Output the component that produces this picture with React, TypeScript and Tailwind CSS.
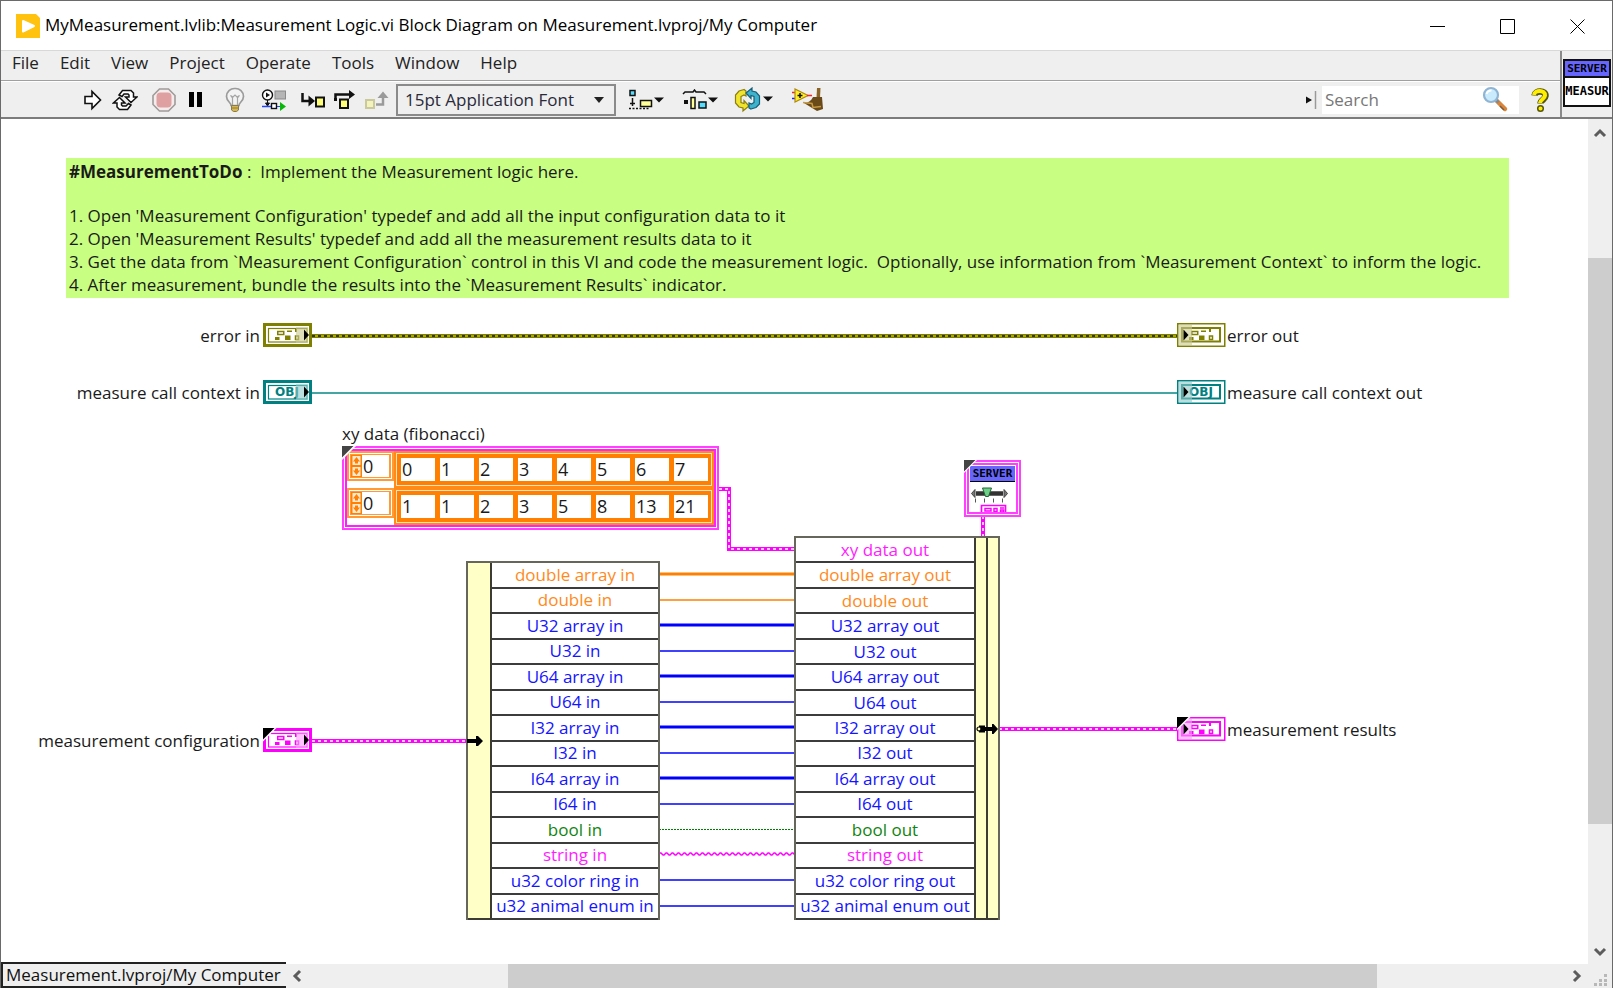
import type { ReactNode } from "react";

const OLIVE = "#808000";
const TEAL = "#008080";
const PINK = "#ff00ff";
const ORANGE = "#ff8000";
const BLUE = "#0000ff";
const GREEN = "#008000";

const ROW_PITCH = 25.5;

type Signal = { name: string; text: string; color: string; wire: "array" | "scalar" | "bool" | "string" };

const signals: Signal[] = [
  { name: "double array", text: "text-[#ff8a1c]", color: ORANGE, wire: "array" },
  { name: "double", text: "text-[#ff8a1c]", color: ORANGE, wire: "scalar" },
  { name: "U32 array", text: "text-[#1414ff]", color: BLUE, wire: "array" },
  { name: "U32", text: "text-[#1414ff]", color: BLUE, wire: "scalar" },
  { name: "U64 array", text: "text-[#1414ff]", color: BLUE, wire: "array" },
  { name: "U64", text: "text-[#1414ff]", color: BLUE, wire: "scalar" },
  { name: "I32 array", text: "text-[#1414ff]", color: BLUE, wire: "array" },
  { name: "I32", text: "text-[#1414ff]", color: BLUE, wire: "scalar" },
  { name: "I64 array", text: "text-[#1414ff]", color: BLUE, wire: "array" },
  { name: "I64", text: "text-[#1414ff]", color: BLUE, wire: "scalar" },
  { name: "bool", text: "text-[#108410]", color: GREEN, wire: "bool" },
  { name: "string", text: "text-[#ff1cff]", color: PINK, wire: "string" },
  { name: "u32 color ring", text: "text-[#1414ff]", color: BLUE, wire: "scalar" },
  { name: "u32 animal enum", text: "text-[#1414ff]", color: BLUE, wire: "scalar" },
];

const fibonacci = [
  { label: "x", values: [0, 1, 2, 3, 4, 5, 6, 7] },
  { label: "y", values: [1, 1, 2, 3, 5, 8, 13, 21] },
];

const menus = ["File", "Edit", "View", "Project", "Operate", "Tools", "Window", "Help"];

function ToolButton({ label, wide, children }: { label: string; wide?: boolean; children: ReactNode }) {
  return (
    <button
      type="button"
      aria-label={label}
      className={wide ? "flex h-8 w-[54px] items-center justify-center" : "flex h-8 w-8 items-center justify-center"}
    >
      {children}
    </button>
  );
}

function RunIcon() {
  return (
    <svg width="20" height="22" viewBox="0 0 20 22" fill="#fff" stroke="#111" strokeWidth="1.6">
      <path d="M2 7.500h7V2.500l8.500 8.500L9 19.500v-5H2z" />
    </svg>
  );
}

function RunContinuousIcon() {
  return (
    <svg width="26" height="22" viewBox="0 0 26 22" fill="#fff" stroke="#111" strokeWidth="1.500">
      <path d="M7 6l3.500-4.500H19l2.500 2.500v4H25l-6 5.500-5.500-5.500H17V6l-1-1h-4L10 7.500z" />
      <path d="M19 16l-3.500 4.500H7.500L5 18v-4H1.500l6-5.500 5.500 5.500H9.500v2l1 1h3.500l2.500-2.500z" />
    </svg>
  );
}

function AbortIcon() {
  return (
    <svg width="26" height="26" viewBox="0 0 26 26">
      <path d="M8.500 2h9L24 8.500v9L17.500 24h-9L2 17.500v-9z" fill="#f4ecec" stroke="#a09a9a" strokeWidth="1.600" />
      <rect x="5.500" y="5.500" width="15" height="15" rx="4" fill="#dfa0a2" />
    </svg>
  );
}

function PauseIcon() {
  return (
    <svg width="16" height="18" viewBox="0 0 16 18" fill="#000">
      <rect x="1" y="1" width="5" height="15" />
      <rect x="9" y="1" width="5" height="15" />
    </svg>
  );
}

function BulbIcon() {
  return (
    <svg width="22" height="26" viewBox="0 0 22 26">
      <path
        d="M11 1.500a8 8 0 0 0-8.500 8c0 3 1.500 4.500 3 6 1 1 1.500 1.800 1.500 3h8c0-1.200.5-2 1.500-3 1.500-1.500 3-3 3-6a8 8 0 0 0-8.500-8z"
        fill="#f3f3f3"
        stroke="#9b9b9b"
        strokeWidth="1.700"
      />
      <path d="M8.500 18V11l-2-2.500L9 10l2-2 2 2 2.500-1.500-2 2.500v7" fill="none" stroke="#a5a5a5" strokeWidth="1.200" />
      <path d="M7.500 18.500h7v4.500l-2 1.500h-3l-2-1.500z" fill="#d9b64a" stroke="#8a7b4a" />
      <path d="M7.500 21h7" stroke="#8a7b4a" />
    </svg>
  );
}

function RetainIcon() {
  return (
    <svg width="26" height="22" viewBox="0 0 26 22">
      <circle cx="6.500" cy="6" r="5" fill="#fff" stroke="#111" strokeWidth="1.400" />
      <path d="M5 3.500v5l4-2.500z" fill="#111" />
      <rect x="14" y="2" width="10.500" height="8" fill="#b5b5b5" stroke="#8a8a8a" />
      <path d="M6.500 11v4M4.500 14h4l-2 3z" fill="#111" stroke="#111" />
      <path d="M1 17.500h10" stroke="#2244ff" strokeWidth="1.500" />
      <rect x="10.500" y="14.500" width="5" height="5" fill="#fff" stroke="#111" strokeWidth="1.400" />
      <path d="M16 17.500h3" stroke="#2244ff" />
      <path d="M19 13l6 4.500-6 4.500z" fill="#08b808" />
    </svg>
  );
}

function StepIntoIcon() {
  return (
    <svg width="26" height="20" viewBox="0 0 26 20">
      <path d="M2.500 3v8H11" fill="none" stroke="#111" strokeWidth="2.500" />
      <path d="M8.500 5.500L15 11l-6.500 5.500z" fill="#111" />
      <rect x="16" y="7.500" width="8" height="9" fill="#ffff77" stroke="#111" strokeWidth="2" />
    </svg>
  );
}

function StepOverIcon() {
  return (
    <svg width="24" height="22" viewBox="0 0 24 22">
      <path d="M2.500 10V5.500H18" fill="none" stroke="#111" strokeWidth="2.500" />
      <path d="M1 9h3v3H1zM16 1l6 4.500L16 10z" fill="#111" />
      <rect x="7" y="10.500" width="8" height="8.500" fill="#ffff77" stroke="#111" strokeWidth="2" />
    </svg>
  );
}

function StepOutIcon() {
  return (
    <svg width="26" height="22" viewBox="0 0 26 22">
      <rect x="2" y="11" width="8" height="8" fill="#f3f3bb" stroke="#c9c99c" strokeWidth="2" />
      <path d="M12 15.500h7V7" fill="none" stroke="#9a9a9a" strokeWidth="2.500" />
      <path d="M13.500 9L19 2.500 24.500 9z" fill="#9a9a9a" />
    </svg>
  );
}

function AlignIcon() {
  return (
    <svg width="36" height="22" viewBox="0 0 36 22">
      <rect x="2" y="1.500" width="5" height="5" fill="#55ddff" stroke="#111" strokeWidth="1.500" />
      <path d="M4.500 9v8M2 14.500h5" stroke="#111" strokeWidth="1.500" />
      <rect x="12.500" y="11.500" width="11" height="6" fill="#ffff99" stroke="#111" strokeWidth="1.500" />
      <path d="M1 19.500h20" stroke="#111" strokeWidth="1.500" strokeDasharray="2 1.500" />
      <path d="M26 8.500h10l-5 5z" fill="#111" />
    </svg>
  );
}

function DistributeIcon() {
  return (
    <svg width="36" height="22" viewBox="0 0 36 22">
      <path d="M1 5l2-2h8l1.500-2L14 3h8l2 2" fill="none" stroke="#111" strokeWidth="1.500" />
      <rect x="2" y="11" width="4" height="4" fill="#111" />
      <rect x="9" y="8.500" width="4" height="11" fill="#ffff99" stroke="#111" strokeWidth="1.500" />
      <rect x="17" y="13" width="7" height="6" fill="#55ddff" stroke="#111" strokeWidth="1.500" />
      <path d="M26 8.500h10l-5 5z" fill="#111" />
    </svg>
  );
}

function ReorderIcon() {
  return (
    <svg width="40" height="26" viewBox="0 0 40 26">
      <path
        d="M10 2.500L5 4 1.500 8v8l3.500 4 4 1v3l6-5-5-5.500v3L7 15.500v-6L10 8l2 1V4z"
        fill="#f0e42c"
        stroke="#8c7d10"
        strokeWidth="1.200"
      />
      <path
        d="M17 22l5-1.500L25.500 17V9L22 5l-4-1V1l-6 5 5 5.500v-3L20 9.500v6L17.500 17 15 16v5z"
        fill="#3fb2cc"
        stroke="#155f78"
        strokeWidth="1.200"
      />
      <path d="M29 9.500h10l-5 5z" fill="#111" />
    </svg>
  );
}

function CleanupIcon() {
  return (
    <svg width="34" height="26" viewBox="0 0 34 26">
      <path d="M1 5.500h4" stroke="#ff2020" strokeWidth="1.500" />
      <path d="M1 11.500h4" stroke="#2020ff" strokeWidth="1.500" />
      <path d="M4 2v13l13-6.500z" fill="#ffee22" stroke="#b08a10" strokeWidth="1.200" />
      <path d="M9 6v5M6.500 8.500h5" stroke="#111" strokeWidth="1.500" />
      <path d="M16 8.500h5" stroke="#ff2020" strokeWidth="1.500" />
      <path d="M26 1h3.500l-.5 10h-3.500z" fill="#8a6426" />
      <path d="M22 10h9l1 12-6 2-13-8c4 0 7-2 9-6z" fill="#6a4a18" />
      <path d="M12 15.500l9 1 1 4 8-1" fill="none" stroke="#c69a45" strokeWidth="1.500" />
    </svg>
  );
}

function MagnifierIcon() {
  return (
    <svg width="28" height="28" viewBox="0 0 28 28">
      <path d="M15.500 14.500L24 23" stroke="#d8863c" strokeWidth="4.500" strokeLinecap="round" />
      <path d="M19 20l4 4" stroke="#7d5a3a" strokeWidth="1.500" />
      <path d="M14.500 13.500l3 3" stroke="#7d8a96" strokeWidth="3" />
      <circle cx="10" cy="9" r="7" fill="#c9ebfb" stroke="#8fb4d4" strokeWidth="2.200" />
      <path d="M5.500 8a5 5 0 0 1 5-3.500" fill="none" stroke="#fff" strokeWidth="2" />
    </svg>
  );
}

function HelpIcon() {
  return (
    <svg width="20" height="26" viewBox="0 0 20 26">
      <path d="M4.500 8.500C5 3 16 3 15.500 9c-.3 3.500-5 4-5 7.500" fill="none" stroke="#55550a" strokeWidth="6.500" />
      <circle cx="10.500" cy="21.500" r="2.800" fill="#ffee00" stroke="#55550a" strokeWidth="1.500" />
      <path d="M4 8C4.500 2.500 15.500 2.500 15 8.500c-.3 3.500-5 4-5 7.500" fill="none" stroke="#ffee00" strokeWidth="4" />
    </svg>
  );
}

function Chevron({ d }: { d: string }) {
  return (
    <svg width="14" height="14" viewBox="0 0 14 14" fill="none" stroke="#5c5c5c" strokeWidth="3">
      <path d={d} />
    </svg>
  );
}

function Terminal({
  color,
  tint,
  output,
  glyph,
  typedef,
}: {
  color: string;
  tint: string;
  output?: boolean;
  glyph: "cluster" | "object";
  typedef?: boolean;
}) {
  return (
    <svg width="49" height="24" viewBox="0 0 49 24" className="block shrink-0">
      {output ? (
        <>
          <rect x="0.750" y="0.750" width="47" height="22.500" fill="#fff" stroke={color} strokeWidth="1.500" />
          <rect x="5" y="5" width="38" height="13.500" fill="#fff" stroke={color} strokeWidth="2" />
        </>
      ) : (
        <>
          <rect x="1.500" y="1.500" width="46" height="21" fill="#fff" stroke={color} strokeWidth="3" />
          <rect x="5.500" y="5.500" width="38.500" height="13.500" fill="#fff" stroke={color} strokeWidth="1.200" />
        </>
      )}
      {glyph === "cluster" ? (
        <g fill={color}>
          <rect x="14.750" y="8.500" width="6" height="3" fill="none" stroke={color} strokeWidth="1.500" />
          <rect x="12" y="14" width="4.500" height="3" />
          <rect x="24" y="7.500" width="5" height="1.500" />
          <rect x="22" y="12.500" width="5.500" height="4.500" />
          <rect x="32" y="5.500" width="2" height="3.500" />
          <rect x="32.500" y="13" width="3" height="3.500" fill="none" stroke={color} strokeWidth="1.500" />
        </g>
      ) : (
        <text x="24" y="16" textAnchor="middle" fill={color} className="font-['DejaVu_Sans'] text-[12px] font-bold">
          OBJ
        </text>
      )}
      {output ? (
        <rect x="2" y="2" width="13" height="20" fill={tint} fillOpacity="0.600" />
      ) : (
        <rect x="33" y="4" width="12" height="16" fill={tint} fillOpacity="0.600" />
      )}
      <path d={output ? "M6.500 6.500l5 5.500-5 5.500z" : "M41 6.500l5 5.500-5 5.500z"} fill="#000" />
      {typedef && (
        <>
          <path d="M0 0h13.500L0 13.500z" fill="#fff" />
          <path d="M0 0h11.500L0 11.500z" fill="#000" />
        </>
      )}
    </svg>
  );
}

function ClusterWire({ d, color, dots }: { d: string; color: string; dots: string }) {
  return (
    <>
      <path d={d} fill="none" stroke={color} strokeWidth="4" />
      <path d={d} fill="none" stroke={dots} strokeWidth="1.500" strokeDasharray="3 3" />
    </>
  );
}

function Wires() {
  const zigzag = "M658 855" + " l2 -2 h1 l2 2 h1".repeat(23);
  return (
    <svg className="absolute top-0 left-0 h-[843px] w-[1587px]" viewBox="1 119 1587 843">
      <ClusterWire d="M312 336H1177" color="#a8a800" dots="#111" />
      <path d="M312 334.500H1177M312 337.500H1177" stroke={OLIVE} strokeWidth="1" />
      <path d="M312 393H1177" stroke="#45a5a5" strokeWidth="2" />
      <ClusterWire d="M312 741H467" color={PINK} dots="#fff" />
      <ClusterWire d="M999 729H1177" color={PINK} dots="#fff" />
      <ClusterWire d="M719 489H729V549H795" color={PINK} dots="#fff" />
      <ClusterWire d="M983 516V538" color={PINK} dots="#fff" />
      {signals.map((s, i) => {
        const y = Math.round(574 + i * ROW_PITCH);
        if (s.wire === "string") return <path key={s.name} d={zigzag} fill="none" stroke={PINK} strokeWidth="1.500" />;
        if (s.wire === "bool")
          return <path key={s.name} d={`M659 ${y + 0.5}H795`} stroke={GREEN} strokeWidth="1" strokeDasharray="2 1" />;
        if (s.wire === "array") return <path key={s.name} d={`M659 ${y}H795`} stroke={s.color} strokeWidth="3" />;
        return <path key={s.name} d={`M659 ${y}H795`} stroke={s.color} strokeOpacity="0.750" strokeWidth="2" />;
      })}
    </svg>
  );
}

function SignalRow({ label, tone }: { label: string; tone: string }) {
  return (
    <li className="flex flex-1 items-center justify-center border-b-2 border-[#3c3c3c]">
      <span className={`leading-5 whitespace-nowrap ${tone}`}>{label}</span>
    </li>
  );
}

function Spinner() {
  return (
    <svg width="11" height="22" viewBox="0 0 11 22" className="shrink-0">
      <rect width="11" height="22" fill={ORANGE} />
      <path d="M1.500 1h8v9h-8zM1.500 12h8v9h-8z" fill="#ffe9d3" />
      <path d="M5.500 2L9 6.500H2zM5.500 20L9 15.500H2zM4 6.500h3v2H4zM4 13.500h3v2H4z" fill={ORANGE} />
    </svg>
  );
}

function ArrayConstant() {
  return (
    <div className="absolute top-[327px] left-[341px] border-2 border-[#ff40ff] bg-white p-px text-[18px]">
      <div className="flex flex-col border-2 border-[#ff20ff] bg-white">
        {fibonacci.map((row) => (
          <div key={row.label} className="flex items-start">
            <div className="border-2 border-[#ff9a35] bg-white p-px">
              <div className="flex border border-[#ff9a35]">
                <Spinner />
                <input
                  aria-label={`${row.label} index`}
                  defaultValue={0}
                  className="h-[22px] w-7 border-r border-[#ff9a35] bg-white pl-px outline-none"
                />
              </div>
            </div>
            <div className="border-2 border-[#ff8a15] bg-[#ffe0c0] p-px">
              <div className="flex gap-[5px] bg-[#ff8000] py-1 pr-[3px] pl-1">
                {row.values.map((v, i) => (
                  <input
                    key={i}
                    aria-label={`${row.label} ${i}`}
                    defaultValue={v}
                    className="h-[23px] w-[34px] bg-white pl-px outline-none"
                  />
                ))}
              </div>
            </div>
          </div>
        ))}
      </div>
      <svg width="14" height="14" viewBox="0 0 14 14" className="absolute -top-[2px] -left-[2px]">
        <path d="M0 0h14L0 14z" fill="#fff" />
        <path d="M0 0h11.500L0 11.500z" fill="#444" />
      </svg>
    </div>
  );
}

function ServerConstant() {
  return (
    <div className="absolute top-[341px] left-[963px] h-[57px] w-[57px] border-2 border-[#ff40ff] bg-white p-px">
      <div className="flex h-full flex-col items-center border-2 border-[#ff40ff] p-px">
        <div className="w-full border-b border-black bg-[#6666ff] text-center font-['DejaVu_Sans_Mono'] text-[11px] leading-[15px] font-bold text-black">
          SERVER
        </div>
        <svg width="45" height="30" viewBox="0 0 45 30" className="shrink-0">
          <path d="M5 7.500L1.500 11.500 5 15.500z" fill="#777" stroke="#444" />
          <path d="M34 7.500l3.500 4L34 15.500z" fill="#777" stroke="#444" />
          <path d="M6 11.500h27" stroke="#333" strokeWidth="4.500" />
          <path d="M5.500 16.500v4M14.500 16.500v4M23.500 16.500v4M32.500 16.500v4" stroke="#555" />
          <path d="M12.500 6h9l-3 8.500h-3z" fill="#6fd08a" stroke="#226633" />
          <path d="M11.500 30v-6.500h24V30" fill="#fff" stroke={PINK} strokeWidth="1.700" />
          <path d="M15 26.500h6v2.500h-6zM24 26.500h3v3h-3zM30 26h4M30.500 28h3v2h-3z" fill="none" stroke={PINK} strokeWidth="1.500" />
        </svg>
      </div>
      <svg width="13" height="13" viewBox="0 0 13 13" className="absolute -top-[2px] -left-[2px]">
        <path d="M0 0h13L0 13z" fill="#fff" />
        <path d="M0 0h11.500L0 11.500z" fill="#444" />
      </svg>
    </div>
  );
}

function Diagram() {
  return (
    <main className="relative min-w-0 flex-1 overflow-hidden bg-white text-[17px] text-[#1a1a1a]">
      <Wires />

      <section className="absolute top-[39px] left-[65px] w-[1443px] bg-[#c8ff82] px-[3px] py-[2px] leading-[23px] whitespace-pre">
        <p className="mb-[21px]">
          <strong className="font-bold">#MeasurementToDo</strong> :&nbsp; Implement the Measurement logic here.
        </p>
        <p>1. Open 'Measurement Configuration' typedef and add all the input configuration data to it</p>
        <p>2. Open 'Measurement Results' typedef and add all the measurement results data to it</p>
        <p>
          3. Get the data from `Measurement Configuration` control in this VI and code the measurement logic.&nbsp; Optionally, use
          information from `Measurement Context` to inform the logic.
        </p>
        <p>4. After measurement, bundle the results into the `Measurement Results` indicator.</p>
      </section>

      <div className="absolute top-[204px] right-[calc(100%-311px)] flex items-start gap-[3px] whitespace-nowrap">
        <span className="leading-[26px]">error in</span>
        <Terminal color={OLIVE} tint="#c8c890" glyph="cluster" />
      </div>
      <div className="absolute top-[261px] right-[calc(100%-311px)] flex items-start gap-[3px] whitespace-nowrap">
        <span className="leading-[26px]">measure call context in</span>
        <Terminal color={TEAL} tint="#90c8c8" glyph="object" />
      </div>
      <div className="absolute top-[609px] right-[calc(100%-311px)] flex items-start gap-[3px] whitespace-nowrap">
        <span className="leading-[26px]">measurement configuration</span>
        <Terminal color={PINK} tint="#ff9cff" glyph="cluster" typedef />
      </div>

      <div className="absolute top-[204px] left-[1176px] flex items-start gap-px whitespace-nowrap">
        <Terminal color={OLIVE} tint="#c8c890" glyph="cluster" output />
        <span className="leading-[26px]">error out</span>
      </div>
      <div className="absolute top-[261px] left-[1176px] flex items-start gap-px whitespace-nowrap">
        <Terminal color={TEAL} tint="#90c8c8" glyph="object" output />
        <span className="leading-[26px]">measure call context out</span>
      </div>
      <div className="absolute top-[598px] left-[1176px] flex items-start gap-px whitespace-nowrap">
        <Terminal color={PINK} tint="#ff9cff" glyph="cluster" output typedef />
        <span className="leading-[26px]">measurement results</span>
      </div>

      <h2 className="absolute top-[303px] left-[341px] leading-6">xy data (fibonacci)</h2>
      <ArrayConstant />
      <ServerConstant />

      <div className="absolute top-[442px] left-[465px] flex h-[359px] w-[194px] border-2 border-b-0 border-[#66665a] bg-white">
        <div className="w-6 shrink-0 border-r-2 border-b-2 border-[#3c3c34] bg-[#ffffc8]" />
        <ul className="flex flex-1 flex-col">
          {signals.map((s) => (
            <SignalRow key={s.name} label={`${s.name} in`} tone={s.text} />
          ))}
        </ul>
      </div>

      <div className="absolute top-[417px] left-[793px] flex h-[384px] w-[206px] border-2 border-b-0 border-[#66665a] bg-white">
        <ul className="flex flex-1 flex-col">
          <SignalRow label="xy data out" tone="text-[#ff1cff]" />
          {signals.map((s) => (
            <SignalRow key={s.name} label={`${s.name} out`} tone={s.text} />
          ))}
        </ul>
        <div className="w-[12px] shrink-0 border-b-2 border-l-2 border-[#3c3c34] bg-[#ffffc8]" />
        <div className="w-[12px] shrink-0 border-b-2 border-l-2 border-[#3c3c34] bg-[#ffffc8]" />
      </div>

      <svg width="16" height="12" viewBox="0 0 16 12" className="absolute top-[616px] left-[466px]">
        <path d="M0 4h9V1h2l5 5-5 5H9V8H0z" fill="#000" />
      </svg>
      <svg width="24" height="12" viewBox="0 0 24 12" className="absolute top-[604px] left-[975px]">
        <path d="M3 2.500h6V4h7V1h1.500L22 6l-4.500 5H16V8H9v1.500H3z" fill="#000" />
        <circle cx="3" cy="6" r="2" fill="#ffffc8" stroke="#000" strokeWidth="1.200" />
      </svg>
    </main>
  );
}

export default function App() {
  return (
    <div className="flex h-screen min-h-[600px] flex-col overflow-hidden border border-b-0 border-[#6a6a6a] bg-white font-['Open_Sans',sans-serif]">
      <header className="flex h-[49px] shrink-0 items-center">
        <svg width="24" height="24" viewBox="0 0 24 24" className="ml-[15px]">
          <path d="M0 0h20l4 4v20H0z" fill="#ffc20e" />
          <path d="M7 7L18 12 7 17.500z" fill="#fff" stroke="#fff" strokeWidth="2" strokeLinejoin="round" />
        </svg>
        <h1 className="ml-[5px] flex-1 truncate pb-px text-[17px] text-black">
          MyMeasurement.lvlib:Measurement Logic.vi Block Diagram on Measurement.lvproj/My Computer
        </h1>
        {[
          { label: "Minimize", d: "M0 8.500h15" },
          { label: "Maximize", d: "M.5 1.500h14v14H.5z" },
          { label: "Close", d: "M.5 1.500l14 14M14.500 1.500l-14 14" },
        ].map((c) => (
          <button key={c.label} type="button" aria-label={c.label} className="flex h-full w-[70px] items-center justify-center">
            <svg width="15" height="16" viewBox="0 0 15 16" fill="none" stroke="#000">
              <path d={c.d} />
            </svg>
          </button>
        ))}
      </header>

      <div className="flex shrink-0 border-t border-b-2 border-t-[#d8d8d8] border-b-[#7c7c7c] bg-[#efefef]">
        <div className="min-w-0 flex-1">
          <nav className="flex h-[30px] items-center gap-[21px] border-b border-[#a0a0a0] pb-[5px] pl-[11px] text-[17px] text-[#222]">
            {menus.map((m) => (
              <button key={m} type="button">
                {m}
              </button>
            ))}
          </nav>
          <div className="flex h-9 items-center border-t border-white">
            <div className="flex items-center gap-[7px] pl-[76px]">
              <div className="flex">
                <ToolButton label="Run"><RunIcon /></ToolButton>
                <ToolButton label="Run continuously"><RunContinuousIcon /></ToolButton>
              </div>
              <div className="flex">
                <ToolButton label="Abort execution"><AbortIcon /></ToolButton>
                <ToolButton label="Pause"><PauseIcon /></ToolButton>
              </div>
              <ToolButton label="Highlight execution"><BulbIcon /></ToolButton>
              <ToolButton label="Retain wire values"><RetainIcon /></ToolButton>
              <div className="flex">
                <ToolButton label="Step into"><StepIntoIcon /></ToolButton>
                <ToolButton label="Step over"><StepOverIcon /></ToolButton>
                <ToolButton label="Step out"><StepOutIcon /></ToolButton>
              </div>
            </div>
            <div className="relative mx-[3px]">
              <select
                aria-label="Text settings"
                className="h-8 w-[220px] appearance-none border-2 border-[#8a8a8a] bg-[#efefef] pl-[7px] text-[17px] text-[#2a2a3a] outline-none"
              >
                <option>15pt Application Font</option>
              </select>
              <svg width="10" height="6" viewBox="0 0 10 6" className="pointer-events-none absolute top-[13px] right-[12px]">
                <path d="M0 0h10L5 6z" fill="#222" />
              </svg>
            </div>
            <div className="flex">
              <ToolButton wide label="Align objects"><AlignIcon /></ToolButton>
              <ToolButton wide label="Distribute objects"><DistributeIcon /></ToolButton>
              <ToolButton wide label="Reorder"><ReorderIcon /></ToolButton>
              <ToolButton wide label="Clean up diagram"><CleanupIcon /></ToolButton>
            </div>
            <div className="ml-auto flex items-center">
              <svg width="12" height="18" viewBox="0 0 12 18" className="mr-[5px]">
                <path d="M1 5.500L7 9l-6 3.500z" fill="#111" />
                <path d="M10.500 0v18" stroke="#999" strokeWidth="1.500" />
              </svg>
              <label className="flex h-7 w-[197px] items-center bg-white pr-[10px]">
                <input
                  type="text"
                  aria-label="Search"
                  placeholder="Search"
                  className="min-w-0 flex-1 pl-[3px] text-[17px] outline-none placeholder:text-[#777]"
                />
                <MagnifierIcon />
              </label>
              <button type="button" aria-label="Context help" className="flex h-8 w-[41px] items-center justify-center">
                <HelpIcon />
              </button>
            </div>
          </div>
        </div>
        <div className="flex shrink-0 items-start border-l-2 border-[#8a8a8a] pt-2 pr-px pl-px">
          <div className="h-12 w-12 overflow-hidden border-2 border-[#111] bg-white font-['DejaVu_Sans_Mono'] font-bold text-black">
            <div className="border-b-2 border-[#111] bg-[#6666ff] text-center text-[11px] leading-[15px]">SERVER</div>
            <div className="text-center text-[12px] leading-[27px]">MEASUR</div>
          </div>
        </div>
      </div>

      <div className="flex min-h-0 flex-1">
        <Diagram />
        <div className="flex w-6 shrink-0 flex-col items-center bg-[#efefef]">
          <button type="button" aria-label="Scroll up" className="flex h-7 w-full items-center justify-center">
            <Chevron d="M2 10l5-5 5 5" />
          </button>
          <div className="flex w-full flex-1 flex-col">
            <div className="flex-[111]" />
            <div className="flex-[566] bg-[#cdcdcd]" />
            <div className="flex-[114]" />
          </div>
          <button type="button" aria-label="Scroll down" className="flex h-6 w-full items-center justify-center">
            <Chevron d="M2 6l5 5 5-5" />
          </button>
        </div>
      </div>

      <footer className="flex h-[26px] shrink-0 bg-[#efefef]">
        <div className="w-[285px] shrink-0 border-2 border-r-0 border-[#222] pl-[3px] text-[17px] leading-[21px] whitespace-nowrap text-[#111]">
          Measurement.lvproj/My Computer
        </div>
        <div className="flex min-w-0 flex-1 items-center border-t-2 border-white">
          <button type="button" aria-label="Scroll left" className="flex h-full w-6 items-center justify-center">
            <Chevron d="M9 2L4 7l5 5" />
          </button>
          <div className="flex h-full flex-1">
            <div className="flex-[198]" />
            <div className="flex-[869] bg-[#cdcdcd]" />
            <div className="flex-[187]" />
          </div>
          <button type="button" aria-label="Scroll right" className="flex h-full w-6 items-center justify-center">
            <Chevron d="M5 2l5 5-5 5" />
          </button>
        </div>
        <svg width="24" height="26" viewBox="0 0 24 26" fill="#b8b8b8" className="shrink-0">
          <path d="M16 12h3v3h-3zM11 17h3v3h-3zM16 17h3v3h-3zM6 21h3v3H6zM11 21h3v3h-3zM16 21h3v3h-3z" />
        </svg>
      </footer>
    </div>
  );
}
